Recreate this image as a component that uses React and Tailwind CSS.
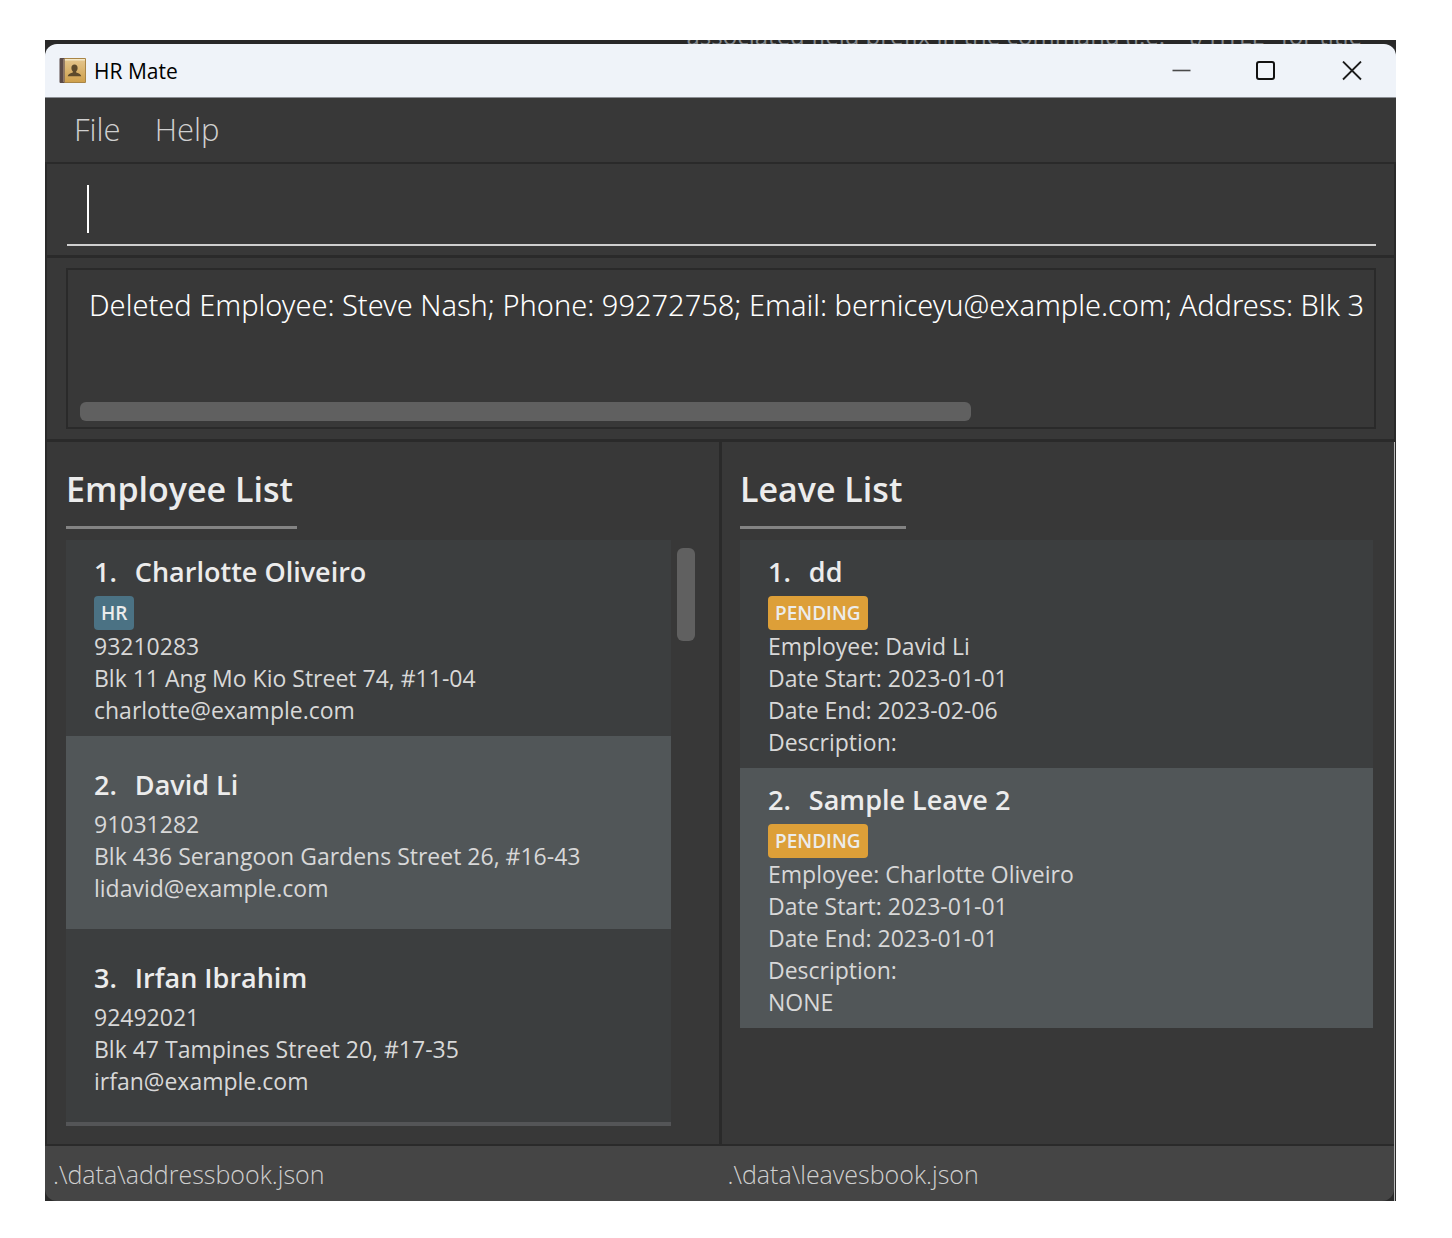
const employees = [
  { name: "Charlotte Oliveiro", tag: "HR", lines: ["93210283", "Blk 11 Ang Mo Kio Street 74, #11-04", "charlotte@example.com"] },
  { name: "David Li", lines: ["91031282", "Blk 436 Serangoon Gardens Street 26, #16-43", "lidavid@example.com"] },
  { name: "Irfan Ibrahim", lines: ["92492021", "Blk 47 Tampines Street 20, #17-35", "irfan@example.com"] },
];

const leaves = [
  { name: "dd", tag: "PENDING", lines: ["Employee: David Li", "Date Start: 2023-01-01", "Date End: 2023-02-06", "Description:"] },
  { name: "Sample Leave 2", tag: "PENDING", lines: ["Employee: Charlotte Oliveiro", "Date Start: 2023-01-01", "Date End: 2023-01-01", "Description:", "NONE"] },
];

function BookIcon() {
  return (
    <svg width="28" height="28" viewBox="0 0 28 28" aria-hidden="true">
      <defs>
        <linearGradient id="cover" x1="0" y1="0" x2="0" y2="1">
          <stop offset="0" stopColor="#e3c48b" />
          <stop offset="1" stopColor="#cfa04c" />
        </linearGradient>
      </defs>
      <rect x="1" y="1" width="26" height="25" rx="1" fill="#a98546" />
      <rect x="2" y="3" width="24" height="22" fill="url(#cover)" />
      <rect x="5" y="2" width="21" height="1.5" fill="#f4e7c6" />
      <rect x="0.5" y="1" width="5" height="25" rx="1" fill="#5b4a48" />
      <rect x="4" y="2" width="1.5" height="23" fill="#8d7768" />
      <path d="M15.500 7.500c2 0 3.100 1.500 3.100 3.400 0 1.300-.6 2.600-1.400 3.300v1.300c1.700.7 4.600 1.200 5 3.700H8.800c.4-2.500 3.300-3 5-3.700v-1.300c-.8-.7-1.400-2-1.400-3.300 0-1.900 1.100-3.400 3.100-3.400z" fill="#5d4a2c" />
    </svg>
  );
}

function TitleBar() {
  return (
    <header className="flex h-[54px] items-center rounded-t-xl border-b border-[#8c8f94] bg-[#eff3f9] pl-[14px] text-black">
      <BookIcon />
      <h1 className="ml-[7px] grow text-[21px] leading-7">HR Mate</h1>
      <button type="button" aria-label="Minimize" className="flex h-full w-[84px] items-center justify-center">
        <svg width="20" height="20" viewBox="0 0 20 20"><path d="M0.500 9.500h18" stroke="#4a4a4a" strokeWidth="1.600" /></svg>
      </button>
      <button type="button" aria-label="Maximize" className="flex h-full w-[84px] items-center justify-center">
        <svg width="20" height="20" viewBox="0 0 20 20"><rect x="1" y="1" width="17" height="17" rx="2" fill="none" stroke="#111" strokeWidth="2" /></svg>
      </button>
      <button type="button" aria-label="Close" className="flex h-full w-[88px] items-center justify-center">
        <svg width="20" height="20" viewBox="0 0 20 20"><path d="M1 0.500l18 18M19 0.500l-18 18" stroke="#1c1c1c" strokeWidth="1.800" /></svg>
      </button>
    </header>
  );
}

function Card({ index, item, tagColor }) {
  const shade = index % 2 === 1 ? "bg-[#515658]" : "bg-[#3c3e3f]";
  const space = item.tag ? "pt-3 pb-[10px]" : "pt-[29px] pb-[25px]";
  return (
    <li className={`px-7 ${shade} ${space}`}>
      <h3 className={`flex gap-[18px] text-[27px] font-semibold leading-10 text-[#ececec] ${item.tag ? "mb-1" : "mb-[3px]"}`}>
        <span>{index + 1}.</span>
        <span>{item.name}</span>
      </h3>
      {item.tag && (
        <div className="flex">
          <span className={`rounded px-[7px] text-[19px] font-semibold leading-[34px] text-[#ececec] ${tagColor}`}>{item.tag}</span>
        </div>
      )}
      {item.lines.map((line) => (
        <p key={line} className="whitespace-nowrap text-[23px] leading-8 text-[#d8d8d8]">{line}</p>
      ))}
    </li>
  );
}

function Heading({ children }) {
  return (
    <h2 className="w-fit border-b-[3px] border-[#838383] pb-[13px] pr-1 text-[34px] font-semibold leading-[48px] text-[#ececec]">
      {children}
    </h2>
  );
}

export default function App() {
  return (
    <div className="min-h-screen bg-white pb-9 pl-[45px] pr-14 pt-10 font-['Open_Sans',sans-serif]">
      <div className="overflow-hidden bg-[#2a2a2a]">
        <div aria-hidden="true" className="flex h-1 items-end justify-end overflow-hidden bg-[#282828] pr-[34px]">
          <span className="whitespace-pre text-[24px] leading-4 text-[#84888d]">associated field prefix in the command (i.e. "-t/TITLE" for title</span>
        </div>
        <TitleBar />

        <nav className="flex h-16 items-center gap-[34px] bg-[#383838] pb-[2px] pl-[29px] text-[31px] font-light text-[#d0d0d0]">
          <button type="button">File</button>
          <button type="button">Help</button>
        </nav>

        <div className="mx-[2px] mt-[2px] bg-[#383838] pb-[9px] pl-5 pr-[18px] pt-4">
          <div className="relative">
            <input aria-label="Command" className="block h-[66px] w-full border-b-2 border-[#cfcfcf] bg-transparent px-5 text-[30px] font-light text-white caret-transparent outline-none" />
            <span aria-hidden="true" className="absolute left-5 top-[5px] h-12 w-[2px] bg-white" />
          </div>
        </div>

        <div className="mx-[2px] mt-[3px] bg-[#383838] pb-[10px] pl-[19px] pr-[18px] pt-[10px]">
          <div className="border-2 border-[#2a2a2a] pb-[6px] pl-3 pr-[2px] pt-[14px]">
            <p className="overflow-hidden whitespace-nowrap pl-[9px] font-['Noto_Sans',sans-serif] text-[29px] font-light leading-[42px] text-white">
              Deleted Employee: Steve Nash; Phone: 99272758; Email: berniceyu@example.com; Address: Blk 3
            </p>
            <div className="mt-[76px] h-[19px] w-[69%] rounded-md bg-[#606060]" />
          </div>
        </div>

        <div className="mr-px border-r border-[#b9b9b9]">
          <main className="mt-[3px] grid grid-cols-2 gap-[3px] pl-[2px]">
            <section className="bg-[#383838] pb-[18px] pl-[19px] pr-6 pt-[23px]">
              <Heading>Employee List</Heading>
              <div className="mt-[11px] flex gap-[6px]">
                <ul className="min-w-0 grow border-b-4 border-[#545557]">
                  {employees.map((e, i) => <Card key={e.name} index={i} item={e} tagColor="bg-[#4b7284]" />)}
                </ul>
                <div className="mt-2 h-[93px] w-[18px] shrink-0 rounded-md bg-[#606060]" />
              </div>
            </section>
            <section className="bg-[#383838] pb-[18px] pl-[18px] pr-[21px] pt-[23px]">
              <Heading>Leave List</Heading>
              <ul className="mt-[11px]">
                {leaves.map((l, i) => <Card key={l.name} index={i} item={l} tagColor="bg-[#dd9f38]" />)}
              </ul>
            </section>
          </main>

          <footer className="mt-[2px] grid h-[55px] grid-cols-2 gap-2 overflow-hidden rounded-b-xl bg-[#454545] pl-2 text-[25px] font-light leading-[56px] text-[#d0d0d0]">
            <span>.\data\addressbook.json</span>
            <span>.\data\leavesbook.json</span>
          </footer>
        </div>
      </div>
    </div>
  );
}
